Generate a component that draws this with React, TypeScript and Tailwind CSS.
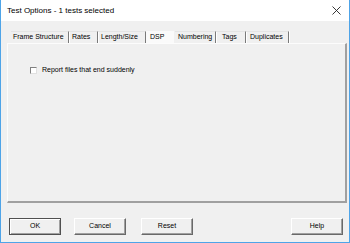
import React from "react";

const tabs = [
  { label: "Frame Structure", w: "w-[58px]", pl: "pl-[2px]" },
  { label: "Rates", w: "w-[29px]", pl: "pl-[3px]" },
  { label: "Length/Size", w: "w-[48px]", pl: "pl-[3px]" },
  { label: "DSP", w: "w-[29px]", pl: "pl-[4px]", active: true },
  { label: "Numbering", w: "w-[41px]", pl: "pl-[3px]" },
  { label: "Tags", w: "w-[30px]", pl: "pl-[6px]" },
  { label: "Duplicates", w: "w-[43px]", pl: "pl-[4px]" },
];

function Btn({ children, def }: { children: React.ReactNode; def?: boolean }) {
  return (
    <div
      className={
        "w-[52px] h-[17px] flex items-center justify-center text-[7px] text-black bg-[#f0f0f0] " +
        (def
          ? "border border-[#505050] shadow-[inset_1px_1px_0_#fff,inset_-1px_-1px_0_#a0a0a0]"
          : "border border-t-white border-l-white border-r-[#696969] border-b-[#696969] shadow-[inset_-1px_-1px_0_#a0a0a0]")
      }
    >
      {children}
    </div>
  );
}

export default function App() {
  return (
    <div
      className="w-[350px] h-[243px] border-x border-b border-[#4ea4e8] bg-[#f0f0f0] flex flex-col overflow-hidden"
      style={{ fontFamily: '"Liberation Sans", Arial, sans-serif' }}
    >
      <div className="h-[21px] bg-white flex items-center justify-between pl-[6px] pr-[6px] shrink-0">
        <span className="text-[8px] text-black">Test Options - 1 tests selected</span>
        <svg width="9" height="9" viewBox="0 0 9 9" className="mr-[2px]">
          <path d="M0.5 0.5 L8.5 8.5 M8.5 0.5 L0.5 8.5" stroke="#222" strokeWidth="0.9" />
        </svg>
      </div>
      <div className="flex flex-col pl-[6px] pr-[2px] pt-[10px]">
        <div className="flex pl-[4px] h-[12px] items-stretch">
          {tabs.map((t) => (
            <div
              key={t.label}
              className={
                t.w +
                " " +
                t.pl +
                " flex items-center text-[7px] text-black whitespace-nowrap " +
                (t.active
                  ? "bg-[#fafafa] border-r border-[#f0f0f0]"
                  : "border-r border-r-[#7a7a7a] border-t border-t-[#e4e4e4] shadow-[1px_0_0_#fff]")
              }
            >
              {t.label}
            </div>
          ))}
        </div>
        <div className="h-[160px] bg-[#f0f0f0] border-l border-t border-l-[#fcfcfc] border-t-[#fcfcfc] border-r-2 border-b-2 border-r-[#a0a0a0] border-b-[#a0a0a0] pl-[22px] pt-[21px]">
          <div className="flex items-center gap-[5px]">
            <div className="w-[7px] h-[7px] bg-white border border-t-[#808080] border-l-[#808080] border-r-[#e0e0e0] border-b-[#e0e0e0]" />
            <span className="text-[7px] text-black">Report files that end suddenly</span>
          </div>
        </div>
        <div className="flex items-center mt-[15px] pl-[2px]">
          <Btn def>OK</Btn>
          <div className="w-[13px]" />
          <Btn>Cancel</Btn>
          <div className="w-[15px]" />
          <Btn>Reset</Btn>
          <div className="flex-1" />
          <div className="mr-[4px]">
            <Btn>Help</Btn>
          </div>
        </div>
      </div>
    </div>
  );
}
